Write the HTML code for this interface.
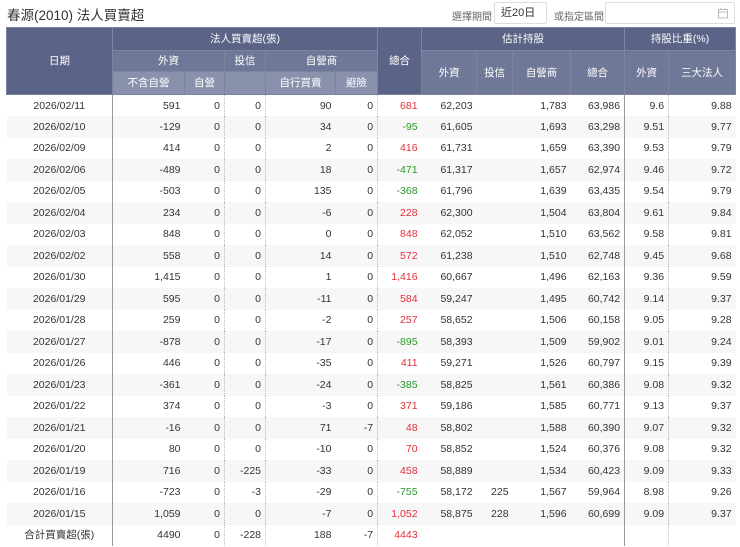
<!DOCTYPE html>
<html><head><meta charset="utf-8"><style>
body{margin:0;background:#fff;font-family:"Liberation Sans","Noto Sans CJK TC",sans-serif;color:#333;}
.title{position:absolute;left:7px;top:4px;font-size:13.5px;color:#333;}
.lab{position:absolute;top:8px;font-size:10px;color:#666;}
.sel{position:absolute;left:494px;top:2px;border:1px solid #ddd;border-radius:2px;font-size:11px;line-height:20px;padding-left:6px;box-sizing:border-box;width:53px;height:22px;}
.inp{position:absolute;left:605px;top:2px;width:130px;height:22px;border:1px solid #ddd;border-radius:2px;box-sizing:border-box;}
table{position:absolute;left:6px;top:27px;border-collapse:collapse;table-layout:fixed;width:729px;font-size:10.5px;}
th{color:#fff;font-weight:normal;font-size:10.5px;padding:0;text-align:center;border:1px solid #7c84a0;line-height:12px;}
.h1{background:#5b6386;height:22px;}
.h2{background:#707897;height:20px;}
.h3{background:#8991ad;height:22px;}
tbody tr{height:21.5px;}
td{padding:0 4px 0 0;text-align:right;white-space:nowrap;line-height:12px;border:none;}
tbody tr:nth-child(even) td{background:#f7f7f7;}
td.d{text-align:center;border-right:1px solid #999;padding:0;}
td.dt{border-right:1px dotted #bbb;}
td.s{border-right:1px solid #999;}
.r{color:#e0303a}.g{color:#2a9a2a}
</style></head><body>
<div class="title">春源(2010) 法人買賣超</div>
<div class="lab" style="left:452px">選擇期間</div>
<div class="sel">近20日 ≑</div>
<div class="lab" style="left:554px">或指定區間</div>
<div class="inp"><svg style="position:absolute;right:5px;top:4px" width="12" height="12" viewBox="0 0 12 12"><rect x="1.5" y="2.5" width="9" height="8.5" fill="none" stroke="#bbb"/><line x1="1.5" y1="5" x2="10.5" y2="5" stroke="#bbb"/><line x1="4" y1="1" x2="4" y2="3" stroke="#bbb"/><line x1="8" y1="1" x2="8" y2="3" stroke="#bbb"/></svg></div>
<table>
<colgroup><col style="width:106px"><col style="width:72px"><col style="width:40px"><col style="width:41px"><col style="width:70px"><col style="width:42px"><col style="width:44px"><col style="width:55px"><col style="width:36px"><col style="width:58px"><col style="width:54px"><col style="width:44px"><col style="width:67px"></colgroup>
<thead>
<tr><th class="h1" rowspan="3">日期</th><th class="h1" colspan="5">法人買賣超(張)</th><th class="h1" rowspan="3">總合</th><th class="h1" colspan="4">估計持股</th><th class="h1" colspan="2">持股比重(%)</th></tr>
<tr><th class="h2" colspan="2">外資</th><th class="h2">投信</th><th class="h2" colspan="2">自營商</th><th class="h2" rowspan="2">外資</th><th class="h2" rowspan="2">投信</th><th class="h2" rowspan="2">自營商</th><th class="h2" rowspan="2">總合</th><th class="h2" rowspan="2">外資</th><th class="h2" rowspan="2">三大法人</th></tr>
<tr><th class="h3">不含自營</th><th class="h3">自營</th><th class="h3"></th><th class="h3">自行買賣</th><th class="h3">避險</th></tr>
</thead>
<tbody>
<tr><td class="d">2026/02/11</td><td>591</td><td class="dt">0</td><td class="dt">0</td><td>90</td><td class="dt">0</td><td class="r">681</td><td>62,203</td><td></td><td>1,783</td><td class="s">63,986</td><td class="dt">9.6</td><td>9.88</td></tr>
<tr><td class="d">2026/02/10</td><td>-129</td><td class="dt">0</td><td class="dt">0</td><td>34</td><td class="dt">0</td><td class="g">-95</td><td>61,605</td><td></td><td>1,693</td><td class="s">63,298</td><td class="dt">9.51</td><td>9.77</td></tr>
<tr><td class="d">2026/02/09</td><td>414</td><td class="dt">0</td><td class="dt">0</td><td>2</td><td class="dt">0</td><td class="r">416</td><td>61,731</td><td></td><td>1,659</td><td class="s">63,390</td><td class="dt">9.53</td><td>9.79</td></tr>
<tr><td class="d">2026/02/06</td><td>-489</td><td class="dt">0</td><td class="dt">0</td><td>18</td><td class="dt">0</td><td class="g">-471</td><td>61,317</td><td></td><td>1,657</td><td class="s">62,974</td><td class="dt">9.46</td><td>9.72</td></tr>
<tr><td class="d">2026/02/05</td><td>-503</td><td class="dt">0</td><td class="dt">0</td><td>135</td><td class="dt">0</td><td class="g">-368</td><td>61,796</td><td></td><td>1,639</td><td class="s">63,435</td><td class="dt">9.54</td><td>9.79</td></tr>
<tr><td class="d">2026/02/04</td><td>234</td><td class="dt">0</td><td class="dt">0</td><td>-6</td><td class="dt">0</td><td class="r">228</td><td>62,300</td><td></td><td>1,504</td><td class="s">63,804</td><td class="dt">9.61</td><td>9.84</td></tr>
<tr><td class="d">2026/02/03</td><td>848</td><td class="dt">0</td><td class="dt">0</td><td>0</td><td class="dt">0</td><td class="r">848</td><td>62,052</td><td></td><td>1,510</td><td class="s">63,562</td><td class="dt">9.58</td><td>9.81</td></tr>
<tr><td class="d">2026/02/02</td><td>558</td><td class="dt">0</td><td class="dt">0</td><td>14</td><td class="dt">0</td><td class="r">572</td><td>61,238</td><td></td><td>1,510</td><td class="s">62,748</td><td class="dt">9.45</td><td>9.68</td></tr>
<tr><td class="d">2026/01/30</td><td>1,415</td><td class="dt">0</td><td class="dt">0</td><td>1</td><td class="dt">0</td><td class="r">1,416</td><td>60,667</td><td></td><td>1,496</td><td class="s">62,163</td><td class="dt">9.36</td><td>9.59</td></tr>
<tr><td class="d">2026/01/29</td><td>595</td><td class="dt">0</td><td class="dt">0</td><td>-11</td><td class="dt">0</td><td class="r">584</td><td>59,247</td><td></td><td>1,495</td><td class="s">60,742</td><td class="dt">9.14</td><td>9.37</td></tr>
<tr><td class="d">2026/01/28</td><td>259</td><td class="dt">0</td><td class="dt">0</td><td>-2</td><td class="dt">0</td><td class="r">257</td><td>58,652</td><td></td><td>1,506</td><td class="s">60,158</td><td class="dt">9.05</td><td>9.28</td></tr>
<tr><td class="d">2026/01/27</td><td>-878</td><td class="dt">0</td><td class="dt">0</td><td>-17</td><td class="dt">0</td><td class="g">-895</td><td>58,393</td><td></td><td>1,509</td><td class="s">59,902</td><td class="dt">9.01</td><td>9.24</td></tr>
<tr><td class="d">2026/01/26</td><td>446</td><td class="dt">0</td><td class="dt">0</td><td>-35</td><td class="dt">0</td><td class="r">411</td><td>59,271</td><td></td><td>1,526</td><td class="s">60,797</td><td class="dt">9.15</td><td>9.39</td></tr>
<tr><td class="d">2026/01/23</td><td>-361</td><td class="dt">0</td><td class="dt">0</td><td>-24</td><td class="dt">0</td><td class="g">-385</td><td>58,825</td><td></td><td>1,561</td><td class="s">60,386</td><td class="dt">9.08</td><td>9.32</td></tr>
<tr><td class="d">2026/01/22</td><td>374</td><td class="dt">0</td><td class="dt">0</td><td>-3</td><td class="dt">0</td><td class="r">371</td><td>59,186</td><td></td><td>1,585</td><td class="s">60,771</td><td class="dt">9.13</td><td>9.37</td></tr>
<tr><td class="d">2026/01/21</td><td>-16</td><td class="dt">0</td><td class="dt">0</td><td>71</td><td class="dt">-7</td><td class="r">48</td><td>58,802</td><td></td><td>1,588</td><td class="s">60,390</td><td class="dt">9.07</td><td>9.32</td></tr>
<tr><td class="d">2026/01/20</td><td>80</td><td class="dt">0</td><td class="dt">0</td><td>-10</td><td class="dt">0</td><td class="r">70</td><td>58,852</td><td></td><td>1,524</td><td class="s">60,376</td><td class="dt">9.08</td><td>9.32</td></tr>
<tr><td class="d">2026/01/19</td><td>716</td><td class="dt">0</td><td class="dt">-225</td><td>-33</td><td class="dt">0</td><td class="r">458</td><td>58,889</td><td></td><td>1,534</td><td class="s">60,423</td><td class="dt">9.09</td><td>9.33</td></tr>
<tr><td class="d">2026/01/16</td><td>-723</td><td class="dt">0</td><td class="dt">-3</td><td>-29</td><td class="dt">0</td><td class="g">-755</td><td>58,172</td><td>225</td><td>1,567</td><td class="s">59,964</td><td class="dt">8.98</td><td>9.26</td></tr>
<tr><td class="d">2026/01/15</td><td>1,059</td><td class="dt">0</td><td class="dt">0</td><td>-7</td><td class="dt">0</td><td class="r">1,052</td><td>58,875</td><td>228</td><td>1,596</td><td class="s">60,699</td><td class="dt">9.09</td><td>9.37</td></tr>
<tr><td class="d">合計買賣超(張)</td><td>4490</td><td class="dt">0</td><td class="dt">-228</td><td>188</td><td class="dt">-7</td><td class="r">4443</td><td></td><td></td><td></td><td class="s"></td><td class="dt"></td><td></td></tr>
</tbody></table>
</body></html>
